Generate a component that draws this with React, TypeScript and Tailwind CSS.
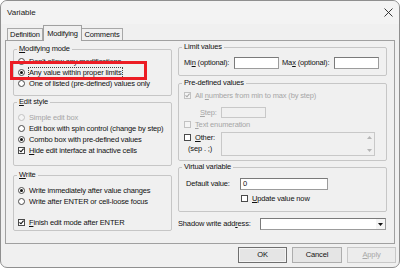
import React from 'react'

type Node = React.ReactNode

const U = ({ children }: { children: Node }) => <span className="underline underline-offset-[1px]">{children}</span>

function Radio({ label, checked, disabled, focus }: { label: Node; checked?: boolean; disabled?: boolean; focus?: boolean }) {
  return (
    <div className="flex h-[11px] items-center">
      <span
        className={`flex h-[7px] w-[7px] shrink-0 items-center justify-center rounded-full border ${
          disabled ? 'border-[#c2c2c2] bg-[#f4f4f4]' : 'border-[#4a4a4a] bg-white'
        }`}
      >
        {checked && <span className="h-[3px] w-[3px] rounded-full bg-[#111]" />}
      </span>
      <span
        className={`ml-[4px] whitespace-nowrap leading-[10px] ${disabled ? 'text-[#a6a6a6]' : 'text-[#111]'} ${
          focus ? 'outline outline-1 outline-dotted outline-[#444]' : ''
        }`}
      >
        {label}
      </span>
    </div>
  )
}

function Check({ label, checked, disabled }: { label: Node; checked?: boolean; disabled?: boolean }) {
  return (
    <div className="flex h-[11px] items-center">
      <Box checked={checked} disabled={disabled} />
      <span className={`ml-[4px] whitespace-nowrap ${disabled ? 'text-[#a6a6a6]' : 'text-[#111]'}`}>{label}</span>
    </div>
  )
}

function Box({ checked, disabled }: { checked?: boolean; disabled?: boolean }) {
  return (
    <span
      className={`flex h-[7px] w-[7px] shrink-0 items-center justify-center border ${
        disabled ? 'border-[#c2c2c2] bg-[#f4f4f4]' : 'border-[#4a4a4a] bg-white'
      }`}
    >
      {checked && (
        <svg width="5" height="5" viewBox="0 0 5 5">
          <path d="M0.5 2.3 L2 3.8 L4.6 0.6" fill="none" stroke={disabled ? '#a8a8a8' : '#111'} strokeWidth="1.1" />
        </svg>
      )}
    </span>
  )
}

function Group({ title, className, children }: { title: Node; className: string; children: Node }) {
  return (
    <fieldset className={`rounded-[2px] border border-[#c6c6c6] p-0 ${className}`}>
      <legend className="ml-[3px] px-[2px] leading-[10px] text-[#111]">{title}</legend>
      {children}
    </fieldset>
  )
}

function Field({ className, disabled }: { className: string; disabled?: boolean }) {
  return (
    <div
      className={`border ${
        disabled ? 'border-[#c8c8c8] bg-[#f0f0f0]' : 'border-[#9c9c9c] border-t-[#7a7a7a] border-l-[#7a7a7a] bg-white'
      } ${className}`}
    />
  )
}

export default function App() {
  return (
    <div className="relative h-[268px] w-[400px] overflow-hidden bg-white font-['Liberation_Sans',Arial,sans-serif] text-[7.5px] tracking-[-0.15px] text-[#111]">
      <div className="flex h-[268px] w-[400px] flex-col rounded-[7px] border border-[#8f8f8f] bg-[#f0f0f0]">
        {/* title bar */}
        <div className="flex h-[23px] items-center justify-between rounded-t-[7px] bg-[#f3f3f3] pl-[6px] pr-[6px]">
          <span className="text-[8px] tracking-[0px] text-[#1a1a1a]">Variable</span>
          <svg width="9" height="9" viewBox="0 0 9 9" className="mr-[0px]">
            <path d="M0.5 0.5 L8.5 8.5 M8.5 0.5 L0.5 8.5" stroke="#222" strokeWidth="0.9" />
          </svg>
        </div>

        <div className="flex flex-col pl-[4px] pr-[3px]">
          {/* tabs */}
          <div className="flex h-[16px] items-end pl-[2px]">
            <div className="flex h-[12px] w-[36px] items-center justify-center border border-b-0 border-[#a8a8a8] bg-[#f0f0f0]">Definition</div>
            <div className="relative z-10 -mb-[1px] flex h-[16px] w-[39px] items-start justify-center border border-b-0 border-[#a0a0a0] bg-[#f0f0f0] pt-[2px]">
              Modifying
            </div>
            <div className="flex h-[12px] w-[41px] items-center justify-center border border-b-0 border-l-0 border-[#a8a8a8] bg-[#f0f0f0]">Comments</div>
          </div>

          {/* tab page */}
          <div className="flex h-[204px] w-[390px] border border-[#a0a0a0] bg-[#f0f0f0]">
            {/* left column */}
            <div className="ml-[7px] flex w-[159px] flex-col pt-[3px]">
              <Group title={<><U>M</U>odifying mode</>} className="h-[52px]">
                <div className="flex flex-col pl-[4px] pt-[2px]">
                  <Radio label="Don't allow any modifications" />
                  <Radio label="Any value within proper limits" checked focus />
                  <Radio label="One of listed (pre-defined) values only" />
                </div>
              </Group>
              <Group title={<><U>E</U>dit style</>} className="mt-[1px] h-[69px]">
                <div className="flex flex-col pl-[4px] pt-[5px]">
                  <Radio label="Simple edit box" disabled />
                  <Radio label="Edit box with spin control (change by step)" />
                  <Radio label="Combo box with pre-defined values" checked />
                  <Check label={<><U>H</U>ide edit interface at inactive cells</>} checked />
                </div>
              </Group>
              <Group title={<><U>W</U>rite</>} className="mt-[4px] h-[61px]">
                <div className="flex flex-col pl-[4px] pt-[5px]">
                  <Radio label="Write immediately after value changes" checked />
                  <Radio label="Write after ENTER or cell-loose focus" />
                  <div className="mt-[10px]">
                    <Check label={<><U>F</U>inish edit mode after ENTER</>} checked />
                  </div>
                </div>
              </Group>
            </div>

            {/* right column */}
            <div className="ml-[6px] flex w-[209px] flex-col pt-[1px]">
              <Group title="Limit values" className="h-[34px]">
                <div className="flex h-[12px] items-center pl-[5px] pt-0 mt-[5px]">
                  <span className="w-[50px] whitespace-nowrap">Mi<U>n</U> (optional):</span>
                  <Field className="h-[12px] w-[45px]" />
                  <span className="ml-[3px] w-[52px] whitespace-nowrap">Ma<U>x</U> (optional):</span>
                  <Field className="h-[12px] w-[45px]" />
                </div>
              </Group>

              <Group title="Pre-defined values" className="mt-[2px] h-[83px]">
                <div className="flex flex-col pl-[5px] pt-[2px]">
                  <Check label={<>All <U>n</U>umbers from min to max (by step)</>} checked disabled />
                  <div className="mt-[6px] flex h-[11px] items-center pl-[16px]">
                    <span className="w-[21px] text-[#a6a6a6]"><U>S</U>tep:</span>
                    <Field className="h-[11px] w-[45px]" disabled />
                  </div>
                  <div className="mt-[1px]">
                    <Check label={<><U>T</U>ext enumeration</>} disabled />
                  </div>
                  <div className="mt-[2px] flex h-[24px]">
                    <div className="flex w-[37px] flex-col">
                      <Check label={<><U>O</U>ther:</>} />
                      <span className="ml-[4px] flex h-[11px] items-center whitespace-nowrap">(sep . ;)</span>
                    </div>
                    <div className="flex h-[24px] w-[154px] justify-end border border-[#c8c8c8] bg-[#f0f0f0]">
                      <div className="flex w-[9px] flex-col items-center justify-between py-[3px]">
                        <svg width="5" height="3" viewBox="0 0 5 3"><path d="M0 3 L2.5 0 L5 3 Z" fill="#b5b5b5" /></svg>
                        <svg width="5" height="3" viewBox="0 0 5 3"><path d="M0 0 L2.5 3 L5 0 Z" fill="#b5b5b5" /></svg>
                      </div>
                    </div>
                  </div>
                </div>
              </Group>

              <Group title="Virtual variable" className="mt-[1px] h-[50px]">
                <div className="flex flex-col pl-[7px] pt-[6px]">
                  <div className="flex h-[12px] items-center">
                    <span className="w-[54px] whitespace-nowrap">Default value:</span>
                    <div className="flex h-[12px] w-[88px] items-center border border-[#9c9c9c] border-t-[#7a7a7a] border-l-[#7a7a7a] bg-white pl-[2px]">0</div>
                  </div>
                  <div className="ml-[55px] mt-[3px]">
                    <Check label={<><U>U</U>pdate value now</>} />
                  </div>
                </div>
              </Group>

              <div className="mt-[6px] flex h-[12px] items-center">
                <span className="w-[82px] whitespace-nowrap">Shadow write add<U>r</U>ess:</span>
                <div className="flex h-[12px] w-[126px] items-center justify-end border border-[#9c9c9c] border-t-[#7a7a7a] border-l-[#7a7a7a] bg-white">
                  <div className="flex h-[10px] w-[9px] items-center justify-center bg-[#f4f4f4]">
                    <svg width="5" height="3" viewBox="0 0 5 3"><path d="M0 0 L2.5 3 L5 0 Z" fill="#111" /></svg>
                  </div>
                </div>
              </div>
            </div>
          </div>

          {/* buttons */}
          <div className="mt-[3px] flex justify-end gap-[5px]">
            <button className="flex h-[16px] w-[49px] items-center justify-center border border-[#6f6f6f] bg-[#e5e5e5] shadow-[inset_0_0_0_1px_#f4f4f4] text-[#111]">OK</button>
            <button className="flex h-[16px] w-[50px] items-center justify-center border border-[#adadad] bg-[#e5e5e5] text-[#111]">Cancel</button>
            <button className="flex h-[16px] w-[49px] items-center justify-center border border-[#c8c8c8] bg-[#ececec] text-[#a8a8a8]"><U>A</U>pply</button>
          </div>
        </div>
      </div>

      {/* red annotation box */}
      <div className="absolute left-[10px] top-[61px] h-[19px] w-[137px] border-[3px] border-[#ec1c24]" />
    </div>
  )
}
